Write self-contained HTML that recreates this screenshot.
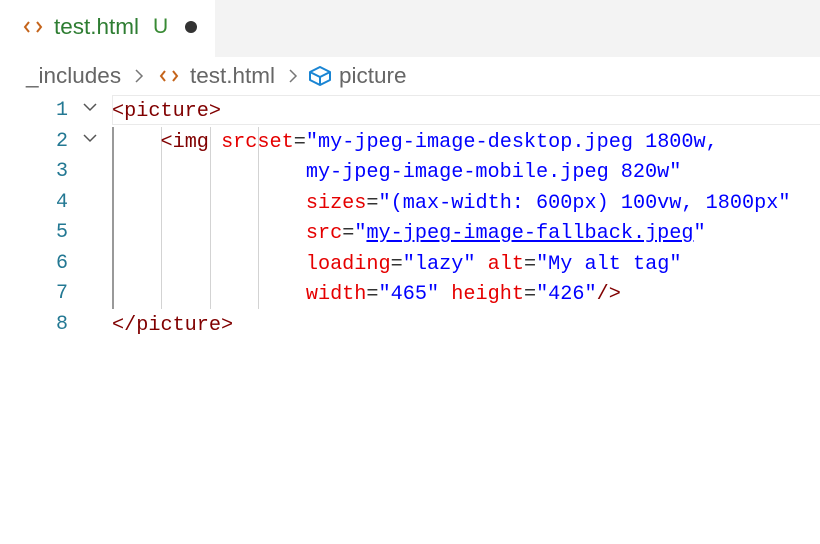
<!DOCTYPE html>
<html><head><meta charset="utf-8"><style>
body{margin:0;width:820px;height:544px;background:#fff;position:relative;overflow:hidden;font-family:"Liberation Sans",sans-serif}
.tabbar{position:absolute;left:0;top:0;width:820px;height:57px;background:#f3f3f3}
.tab{position:absolute;left:0;top:0;width:215px;height:57px;background:#fff}
.t{position:absolute;white-space:pre}
.code{position:absolute;font-family:"Liberation Mono",monospace;font-size:20.2px;white-space:pre;line-height:30.5px}
.ln{position:absolute;left:40px;width:28px;text-align:right;font-family:"Liberation Mono",monospace;font-size:20px;color:#237893;line-height:30.5px}
.tg{color:#800000}.at{color:#e50000}.s{color:#0000ff}.p{color:#333}
.u{text-decoration:underline}
.g{position:absolute;width:1px;background:#d3d3d3;top:127px;height:182px}
.ic{position:absolute}
</style></head><body>
<div class="tabbar"></div><div class="tab"></div>
<svg class="ic" style="left:23px;top:19px" width="20" height="16" viewBox="0 0 20 16"><path d="M6 3 L2 8 L6 13 M14 3 L18 8 L14 13" fill="none" stroke="#c5641b" stroke-width="2"/></svg>
<div class="t" style="left:54px;top:14px;font-size:22.5px;color:#2e7d32">test.html</div>
<div class="t" style="left:153px;top:15px;font-size:21px;color:#388a34">U</div>
<div style="position:absolute;left:185px;top:21px;width:12px;height:12px;border-radius:50%;background:#333"></div>
<div class="t" style="left:26px;top:63px;font-size:22.5px;color:#666">_includes</div>
<svg class="ic" style="left:133px;top:67px" width="12" height="18" viewBox="0 0 12 18"><path d="M3 3 L9 9 L3 15" fill="none" stroke="#777" stroke-width="1.5"/></svg>
<svg class="ic" style="left:159px;top:68px" width="20" height="16" viewBox="0 0 20 16"><path d="M6 3 L2 8 L6 13 M14 3 L18 8 L14 13" fill="none" stroke="#c5641b" stroke-width="2"/></svg>
<div class="t" style="left:190px;top:63px;font-size:22.5px;color:#666">test.html</div>
<svg class="ic" style="left:287px;top:67px" width="12" height="18" viewBox="0 0 12 18"><path d="M3 3 L9 9 L3 15" fill="none" stroke="#777" stroke-width="1.5"/></svg>
<svg class="ic" style="left:308px;top:65px" width="24" height="22" viewBox="0 0 24 22"><path d="M12 2 L22 7 L22 15 L12 20 L2 15 L2 7 Z M2 7 L12 12 L22 7 M12 12 L12 20" fill="none" stroke="#1a85d3" stroke-width="2" stroke-linejoin="round"/></svg>
<div class="t" style="left:339px;top:63px;font-size:22.5px;color:#666">picture</div>
<div style="position:absolute;left:112px;top:95px;width:710px;height:28px;border:1px solid #eaeaea;border-right:none"></div>
<div class="ln" style="top:96px">1<br>2<br>3<br>4<br>5<br>6<br>7<br>8</div>
<svg class="ic" style="left:82px;top:101px" width="16" height="12" viewBox="0 0 16 12"><path d="M2 3 L8 9 L14 3" fill="none" stroke="#555" stroke-width="1.5"/></svg>
<svg class="ic" style="left:82px;top:132px" width="16" height="12" viewBox="0 0 16 12"><path d="M2 3 L8 9 L14 3" fill="none" stroke="#555" stroke-width="1.5"/></svg>
<div class="g" style="left:112px;background:#999;width:2px"></div><div class="g" style="left:161px"></div><div class="g" style="left:210px"></div><div class="g" style="left:258px"></div>
<div class="code" style="left:112px;top:97px"><span class="tg">&lt;picture&gt;</span>
    <span class="tg">&lt;img</span> <span class="at">srcset</span><span class="p">=</span><span class="s">"my-jpeg-image-desktop.jpeg 1800w,</span>
<span class="s">                my-jpeg-image-mobile.jpeg 820w"</span>
                <span class="at">sizes</span><span class="p">=</span><span class="s">"(max-width: 600px) 100vw, 1800px"</span>
                <span class="at">src</span><span class="p">=</span><span class="s">"<span class="u">my-jpeg-image-fallback.jpeg</span>"</span>
                <span class="at">loading</span><span class="p">=</span><span class="s">"lazy"</span> <span class="at">alt</span><span class="p">=</span><span class="s">"My alt tag"</span>
                <span class="at">width</span><span class="p">=</span><span class="s">"465"</span> <span class="at">height</span><span class="p">=</span><span class="s">"426"</span><span class="tg">/&gt;</span>
<span class="tg">&lt;/picture&gt;</span></div>
</body></html>
